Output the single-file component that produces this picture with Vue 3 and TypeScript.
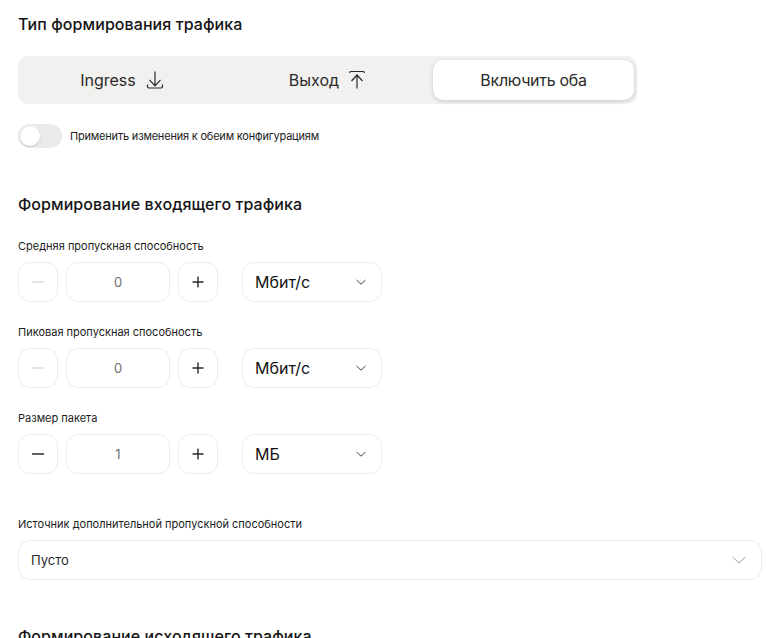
<script setup lang="ts">
interface Row { label: string; value: string; unit: string; minusOff: boolean }
const rows: Row[] = [
  { label: 'Средняя пропускная способность', value: '0', unit: 'Мбит/с', minusOff: true },
  { label: 'Пиковая пропускная способность', value: '0', unit: 'Мбит/с', minusOff: true },
  { label: 'Размер пакета', value: '1', unit: 'МБ', minusOff: false },
]
</script>

<template>
  <main class="page">
    <h2 class="title first">Тип формирования трафика</h2>
    <div class="segment">
      <div class="seg-item in">
        <span>Ingress</span>
        <svg width="20" height="20" viewBox="0 0 20 20" fill="none" stroke="#2a2a2a" stroke-width="1.2">
          <path d="M10 1.5V15.5M4.5 9.8L10 15.8L15.5 9.8" />
          <path d="M2.5 14.5V16.5Q2.5 18 4 18H16Q17.5 18 17.5 16.5V14.5" />
        </svg>
      </div>
      <div class="seg-item out">
        <span>Выход</span>
        <svg width="20" height="20" viewBox="0 0 20 20" fill="none" stroke="#2a2a2a" stroke-width="1.2">
          <path d="M2.5 3Q2.5 1.5 4 1.5H16Q17.5 1.5 17.5 3" />
          <path d="M10 18.5V4.8M4.5 11L10 5L15.5 11" />
        </svg>
      </div>
      <div class="seg-item active"><span>Включить оба</span></div>
    </div>

    <div class="toggle-row">
      <span class="toggle"><span class="knob"></span></span>
      <span class="small tight">Применить изменения к обеим конфигурациям</span>
    </div>

    <h2 class="title second">Формирование входящего трафика</h2>

    <section v-for="row in rows" :key="row.label" class="field">
      <label class="small">{{ row.label }}</label>
      <div class="controls">
        <button class="step" :class="{ off: row.minusOff }" type="button">
          <svg width="14" height="14" viewBox="0 0 14 14" fill="none" stroke="currentColor" stroke-width="1.5"><path d="M1 7H13" /></svg>
        </button>
        <div class="num">{{ row.value }}</div>
        <button class="step" type="button">
          <svg width="14" height="14" viewBox="0 0 14 14" fill="none" stroke="currentColor" stroke-width="1.4"><path d="M1.5 7H12.5M7 1.5V12.5" /></svg>
        </button>
        <div class="unit">
          <span>{{ row.unit }}</span>
          <svg width="12" height="8" viewBox="0 0 12 8" fill="none" stroke="#444" stroke-width="1"><path d="M1.5 2L6 6.2L10.5 2" /></svg>
        </div>
      </div>
    </section>

    <section class="field source">
      <label class="small">Источник дополнительной пропускной способности</label>
      <div class="wide">
        <span>Пусто</span>
        <svg width="16" height="10" viewBox="0 0 16 10" fill="none" stroke="#a0a0a0" stroke-width="1"><path d="M1.5 2L8 8L14.5 2" /></svg>
      </div>
    </section>

    <h2 class="title third">Формирование исходящего трафика</h2>
  </main>
</template>

<style>
html, body { margin: 0; background: #fff; overflow: hidden; }
</style>

<style scoped>
.page {
  box-sizing: border-box;
  width: 766px;
  height: 638px;
  overflow: hidden;
  padding: 0 4px 0 18px;
  font-family: Inter, "Noto Sans", sans-serif;
  color: #1b1b1b;
}
.title {
  margin: 0;
  font-size: 16px;
  line-height: 20px;
  font-weight: 500;
  letter-spacing: 0.07px;
  color: #141414;
}
.first { padding-top: 14px; }
.second { margin-top: 46px; }
.third { margin-top: 46px; }
.segment {
  display: grid;
  grid-template-columns: 206px 209px 201px;
  width: 619px;
  height: 48px;
  box-sizing: border-box;
  margin-top: 22px;
  padding: 4px 3px 4px 0;
  background: #f2f1ef;
  border-radius: 10px;
}
.seg-item {
  display: flex;
  align-items: center;
  justify-content: center;
  font-size: 16px;
  color: #2a2a2a;
  border-radius: 10px;
}
.seg-item.in { gap: 9px; padding-left: 3px; }
.seg-item.out { gap: 8px; padding-right: 1px; }
.seg-item.active {
  background: #fff;
  box-shadow: 0 1px 4px rgba(0, 0, 0, 0.18);
  letter-spacing: -0.3px;
}
.toggle-row {
  display: flex;
  align-items: center;
  gap: 8px;
  margin-top: 20px;
  height: 24px;
}
.toggle {
  display: flex;
  align-items: center;
  width: 44px;
  height: 24px;
  padding: 2px;
  box-sizing: border-box;
  background: #ebeae8;
  border-radius: 12px;
}
.knob {
  width: 20px;
  height: 20px;
  background: #fff;
  border-radius: 50%;
  box-shadow: 0 1px 2px rgba(0, 0, 0, 0.15);
}
.small {
  display: block;
  font-size: 11px;
  line-height: 14px;
  color: #1b1b1b;
}
.tight { letter-spacing: -0.2px; }
.field { margin-top: 23px; }
.second + .field { margin-top: 25px; }
.field.source { margin-top: 43px; }
.controls {
  display: flex;
  align-items: center;
  margin-top: 9px;
  gap: 8px;
}
.step, .num, .unit, .wide {
  box-sizing: border-box;
  background: #fff;
  border: 1px solid #ececec;
  border-radius: 12px;
  height: 40px;
}
.step {
  display: flex;
  align-items: center;
  justify-content: center;
  width: 40px;
  padding: 0;
  color: #2a2a2a;
}
.step.off { color: #dcdcdc; }
.num {
  display: flex;
  align-items: center;
  justify-content: center;
  width: 104px;
  font-size: 13px;
  color: #707070;
}
.unit {
  display: flex;
  align-items: center;
  justify-content: space-between;
  width: 140px;
  margin-left: 16px;
  padding: 0 14px 0 12px;
  font-size: 16px;
  color: #111;
}
.wide {
  display: flex;
  align-items: center;
  justify-content: space-between;
  margin-top: 9px;
  padding: 0 14px 0 12px;
  font-size: 13px;
  color: #2a2a2a;
}
</style>
